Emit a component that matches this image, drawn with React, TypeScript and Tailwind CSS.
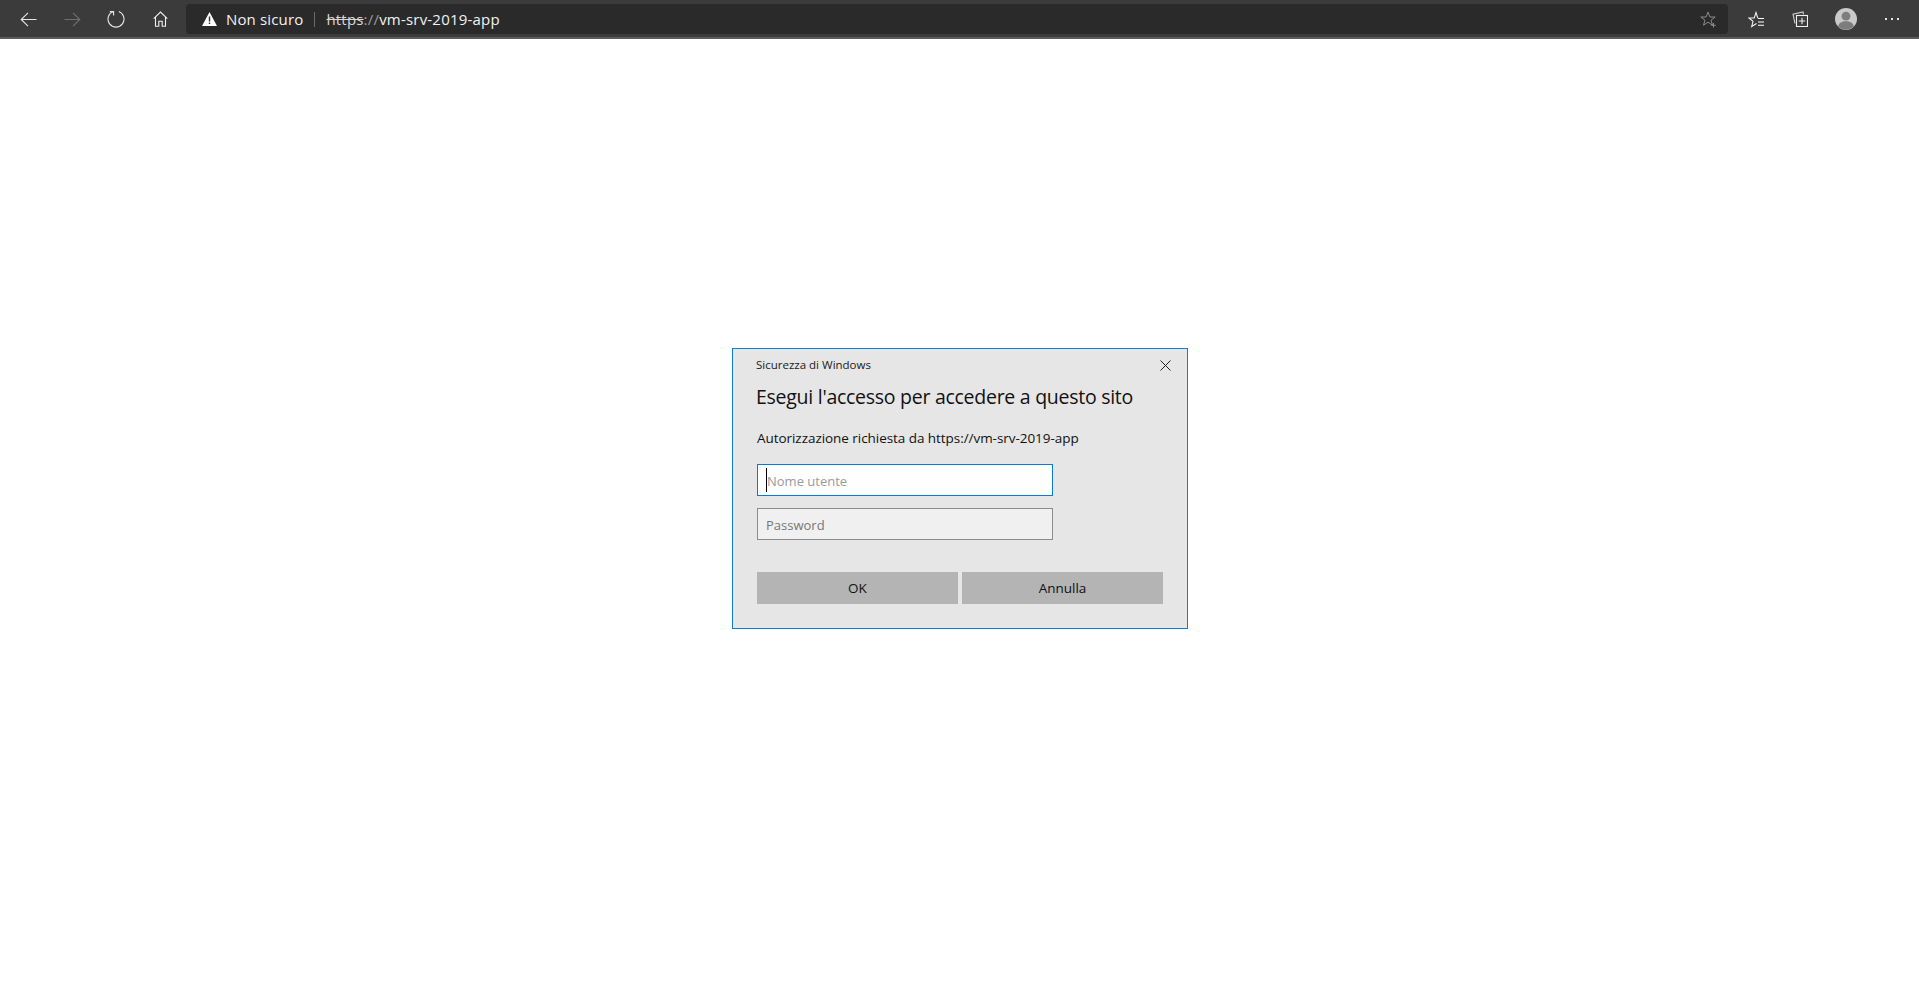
const font = { fontFamily: '"Open Sans", "Noto Sans", sans-serif' };

function NavBox({ children }: { children: React.ReactNode }) {
  return <div className="flex h-[38px] w-[44px] shrink-0 items-center justify-center">{children}</div>;
}

function Back({ color = "#e6e6e6", flip = false }: { color?: string; flip?: boolean }) {
  return (
    <svg width="17" height="15" viewBox="0 0 17 15" fill="none" stroke={color} strokeWidth="1.1" style={flip ? { transform: "scaleX(-1)" } : undefined}>
      <path d="M1 7.5H16.5M8 .8L1.2 7.5 8 14.2" />
    </svg>
  );
}

function Toolbar() {
  return (
    <div className="flex h-[39px] shrink-0 items-start border-b-2 border-[#5c5c5c] bg-[#3b3b3b] pl-[6px] pr-[5px]">
      <NavBox><Back /></NavBox>
      <NavBox><Back color="#6f6f6f" flip /></NavBox>
      <NavBox>
        <svg width="18" height="18" viewBox="0 0 18 18" fill="none" stroke="#e6e6e6" strokeWidth="1.1">
          <path d="M6.2 1.6A8 8 0 1 0 11.8 1.6" />
          <path d="M2.8 1.6H6.6V5.4" />
        </svg>
      </NavBox>
      <NavBox>
        <svg width="15" height="16" viewBox="0 0 15 16" fill="none" stroke="#f0f0f0" strokeWidth="1.1">
          <path d="M.7 7.6L7.5 1l6.8 6.6M2.5 6.2v9h3.3v-5h3.4v5h3.3v-9" />
        </svg>
      </NavBox>
      <div className="ml-[4px] mt-[4px] flex h-[30px] flex-1 items-center rounded-[4px] bg-[#2a2a2a] pl-[16px] pr-[11px] text-[15px] tracking-[0.15px] text-[#f2f2f2]" style={font}>
        <svg width="15" height="14" viewBox="0 0 15 14">
          <path fillRule="evenodd" fill="#ffffff" d="M7.5 0L15 14H0zM6.8 4.6v5h1.4v-5zM6.8 10.4v1.6h1.4v-1.6z" />
        </svg>
        <span className="ml-[9px]">Non sicuro</span>
        <span className="ml-[11px] h-[15px] w-px bg-[#6a6a6a]" />
        <span className="ml-[11px] tracking-[0.2px]">
          <span className="text-[#d8d8d8] line-through">https</span>
          <span className="text-[#9a9a9a]">://</span>
          vm-srv-2019-app
        </span>
        <div className="ml-auto">
          <svg width="17" height="17" viewBox="0 0 17 17" fill="none" stroke="#8a8a8a" strokeWidth="1">
            <path d="M8 1l1.9 5h5.3l-4.2 3.2 1.5 5-4.5-3-4.5 3 1.5-5L.8 6h5.3z" />
            <path d="M13.5 12v4.5M11.2 14.3h4.6" />
          </svg>
        </div>
      </div>
      <div className="ml-[7px]"><NavBox>
        <svg width="18" height="17" viewBox="0 0 18 17" fill="none" stroke="#f0f0f0" strokeWidth="1.1">
          <path d="M9.8 7.2L8 1.5 6.2 7H.8L5 10.3 3.7 15.5 8.5 12.5" />
          <path d="M10 7.5h6M10 11h6M10 14.2h6" stroke="#ffffff" />
        </svg>
      </NavBox></div>
      <div className="-ml-[1px]"><NavBox>
        <svg width="16" height="16" viewBox="0 0 16 16" fill="none" stroke="#f0f0f0" strokeWidth="1.1">
          <path d="M3 12.5L1 3.2 11 1l.6 2.4" stroke="#cfcfcf" />
          <rect x="4.5" y="4.5" width="11" height="11" />
          <path d="M10 6.8v6.4M6.8 10h6.4" />
        </svg>
      </NavBox></div>
      <div className="ml-[2px]"><NavBox>
        <svg width="22" height="22" viewBox="0 0 22 22">
          <circle cx="11" cy="11" r="11" fill="#c9c9c9" />
          <circle cx="11" cy="8.2" r="4.4" fill="#7d7d7d" />
          <path d="M3 18.2C4.2 14.6 7 13.2 11 13.2s6.8 1.4 8 5A11 11 0 0 1 3 18.2z" fill="#7d7d7d" />
        </svg>
      </NavBox></div>
      <div className="ml-[2px]"><NavBox>
        <div className="-mt-[1px] flex gap-[4px]">
          <span className="h-[2px] w-[2px] bg-[#e6e6e6]" />
          <span className="h-[2px] w-[2px] bg-[#e6e6e6]" />
          <span className="h-[2px] w-[2px] bg-[#e6e6e6]" />
        </div>
      </NavBox></div>
    </div>
  );
}

function Dialog() {
  return (
    <div className="flex h-[281px] w-[456px] flex-col border border-[#0c7fd9] bg-[#e6e6e6] pl-[24px] pr-[24px] text-black" style={font}>
      <div className="flex h-[32px] items-center justify-between">
        <span className="-ml-[1px] text-[11.5px] text-[#1a1a1a]">Sicurezza di Windows</span>
        <svg className="-mr-[8px]" width="11" height="11" viewBox="0 0 11 11" stroke="#222" strokeWidth="1">
          <path d="M.5.5l10 10M10.5.5l-10 10" />
        </svg>
      </div>
      <div className="-ml-[1px] mt-[2px] whitespace-nowrap text-[19.5px] leading-[28px] tracking-[-0.27px] text-[#111]">Esegui l'accesso per accedere a questo sito</div>
      <div className="mt-[17px] whitespace-nowrap text-[13.5px] leading-[20px] tracking-[-0.05px] text-[#111]">Autorizzazione richiesta da https://vm-srv-2019-app</div>
      <div className="mt-[16px] flex h-[32px] w-[296px] items-center border border-[#0b78d6] bg-white pl-[8px] text-[13px] text-[#9a9a9a]">
        <span className="h-[24px] w-px bg-black" />
        <span className="pt-[4px]">Nome utente</span>
      </div>
      <div className="mt-[12px] flex h-[32px] w-[296px] items-center border border-[#8c8c8c] bg-[#f0f0f0] pl-[8px] pt-[4px] text-[13px] text-[#777777]">
        Password
      </div>
      <div className="mt-[32px] flex gap-[4px]">
        <div className="flex h-[32px] w-[201px] items-center justify-center bg-[#b4b4b4] pt-[1px] text-[13.5px] text-[#111]">OK</div>
        <div className="flex h-[32px] w-[201px] items-center justify-center bg-[#b4b4b4] pt-[1px] text-[13.5px] text-[#111]">Annulla</div>
      </div>
    </div>
  );
}

export default function App() {
  return (
    <div className="flex h-[1008px] flex-col overflow-hidden bg-white">
      <Toolbar />
      <main className="flex flex-1 justify-center pt-[309px] pl-[1px]">
        <Dialog />
      </main>
    </div>
  );
}
